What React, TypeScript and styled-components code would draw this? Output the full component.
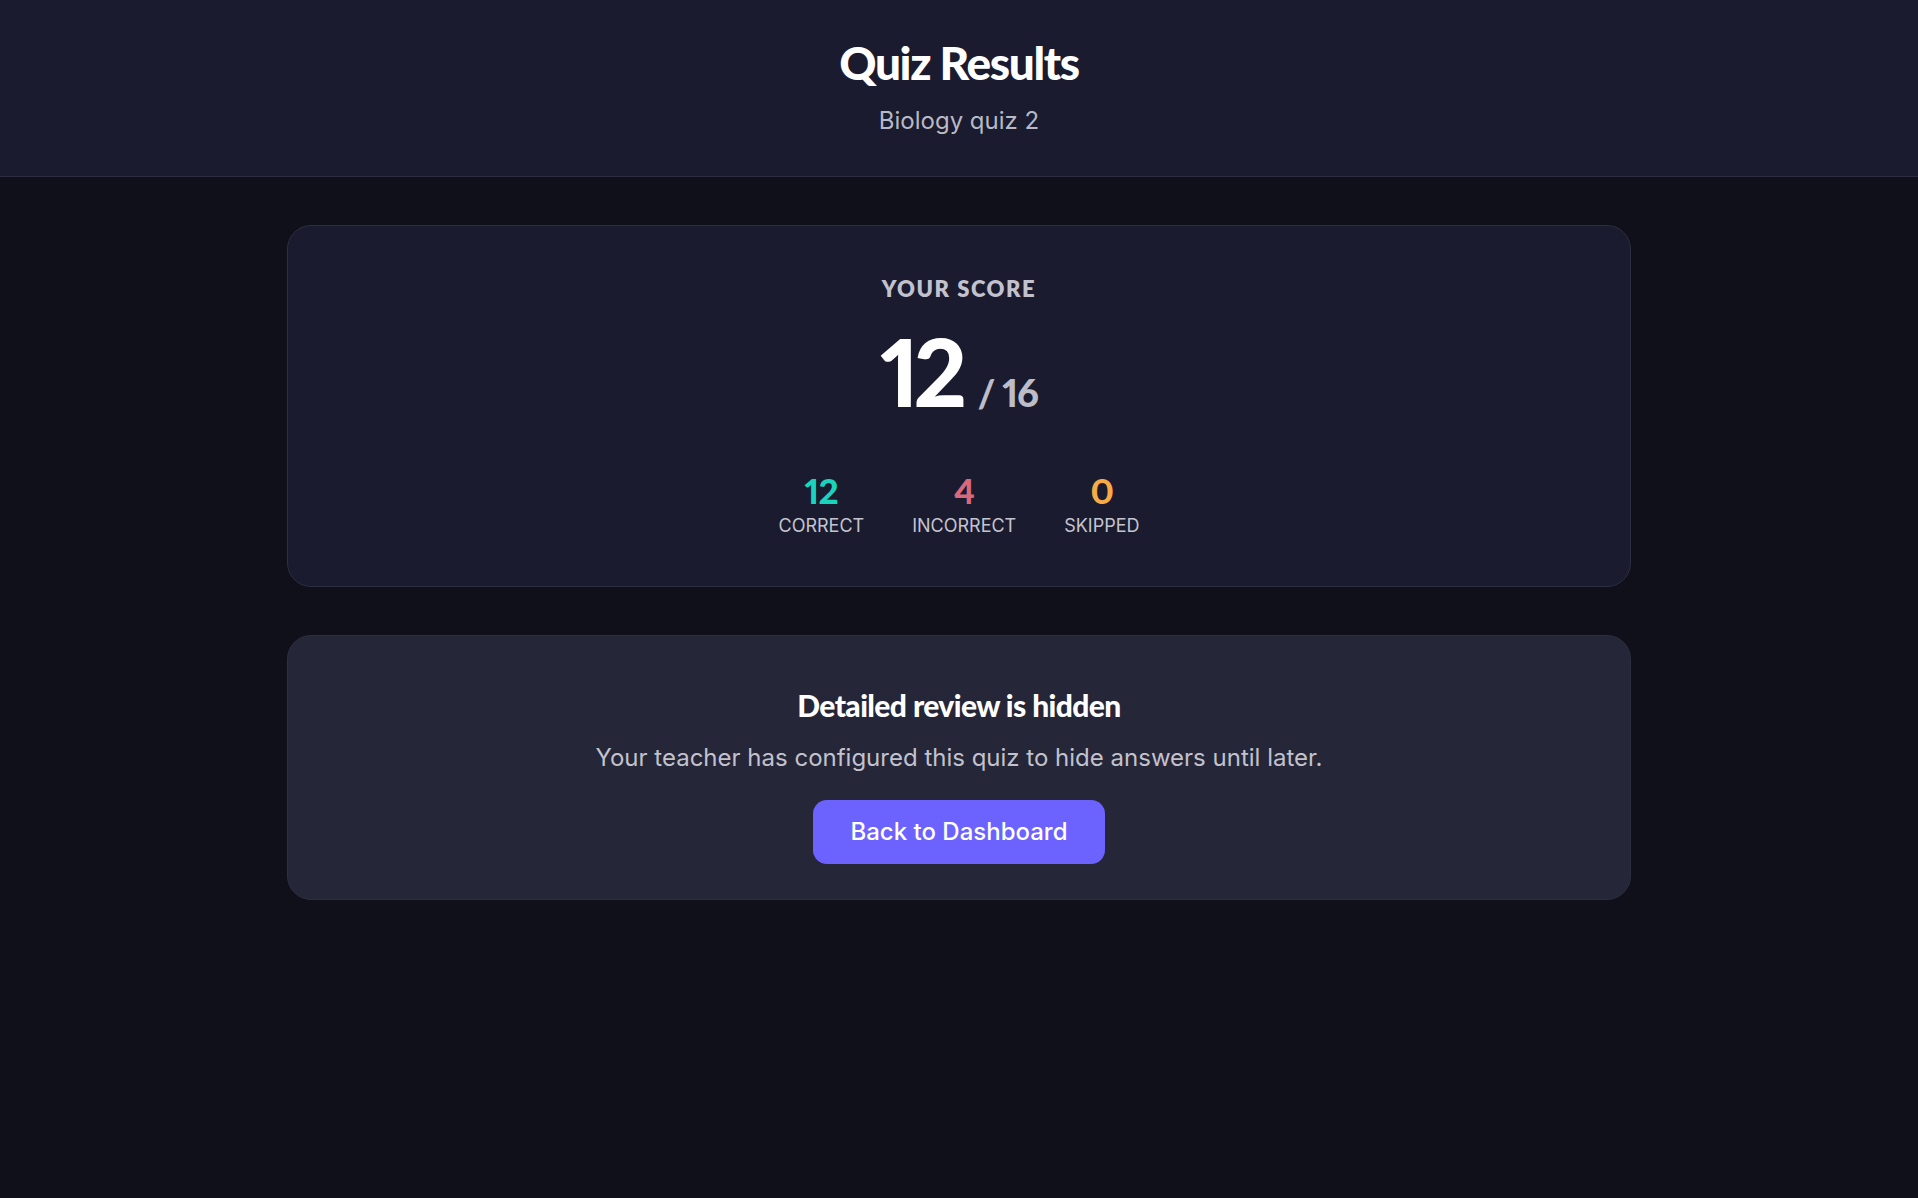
import styled, { createGlobalStyle } from 'styled-components'

const GlobalStyle = createGlobalStyle`
  * { box-sizing: border-box; }
  html, body {
    margin: 0;
    padding: 0;
    background: #0f1019;
    min-height: 100%;
  }
  body {
    font-family: Inter, 'Noto Sans', sans-serif;
    color: #ffffff;
  }
`

interface Stat {
  value: number
  label: string
  tone: 'correct' | 'incorrect' | 'skipped'
}

const stats: Stat[] = [
  { value: 12, label: 'Correct', tone: 'correct' },
  { value: 4, label: 'Incorrect', tone: 'incorrect' },
  { value: 0, label: 'Skipped', tone: 'skipped' },
]

const toneColor = {
  correct: '#19d3bd',
  incorrect: '#d9687c',
  skipped: '#f7aa45',
}

export default function App() {
  return (
    <Page>
      <GlobalStyle />
      <Header>
        <Title>Quiz Results</Title>
        <Subtitle>Biology quiz 2</Subtitle>
      </Header>

      <Main>
        <ScoreCard>
          <ScoreLabel>Your Score</ScoreLabel>
          <ScoreLine>
            <ScoreValue>12</ScoreValue>
            <ScoreTotal>/ 16</ScoreTotal>
          </ScoreLine>
          <StatRow>
            {stats.map((s) => (
              <StatItem key={s.label}>
                <StatValue $tone={s.tone}>{s.value}</StatValue>
                <StatLabel>{s.label}</StatLabel>
              </StatItem>
            ))}
          </StatRow>
        </ScoreCard>

        <ReviewCard>
          <ReviewTitle>Detailed review is hidden</ReviewTitle>
          <ReviewText>Your teacher has configured this quiz to hide answers until later.</ReviewText>
          <PrimaryButton type="button">Back to Dashboard</PrimaryButton>
        </ReviewCard>
      </Main>
    </Page>
  )
}

/* ─── Styles ─── */

const headingFont = `Lato, 'Noto Sans', sans-serif`

const Page = styled.div`
  min-height: 100vh;
  background: #0f1019;
`

const Header = styled.header`
  display: flex;
  flex-direction: column;
  align-items: center;
  padding: 35px 24px 37px;
  background: #1a1b2e;
  border-bottom: 1px solid #2c2d3f;
`

const Title = styled.h1`
  margin: 0 0 13px;
  font-family: ${headingFont};
  font-size: 46px;
  font-weight: 900;
  line-height: 1.2;
  letter-spacing: -0.03em;
  color: #ffffff;
`

const Subtitle = styled.p`
  margin: 0;
  font-size: 24px;
  line-height: 1.5;
  color: #b8b9c6;
`

const Main = styled.main`
  display: flex;
  flex-direction: column;
  gap: 48px;
  width: 100%;
  max-width: 1344px;
  margin: 0 auto;
  padding-top: 48px;
`

const Card = styled.section`
  display: flex;
  flex-direction: column;
  align-items: center;
  border: 1px solid #2d2e40;
  border-radius: 24px;
`

const ScoreCard = styled(Card)`
  padding: 50px 24px 47px;
  background: #1a1b2e;
`

const ScoreLabel = styled.div`
  font-family: ${headingFont};
  font-size: 22px;
  font-weight: 800;
  line-height: 1.2;
  letter-spacing: 0.07em;
  text-transform: uppercase;
  color: #c2c2ce;
`

const ScoreLine = styled.div`
  display: flex;
  align-items: baseline;
  gap: 16px;
  margin-top: 22px;
`

const ScoreValue = styled.span`
  font-family: ${headingFont};
  font-size: 93px;
  font-weight: 900;
  line-height: 1;
  letter-spacing: -0.06em;
  font-feature-settings: 'pnum';
  color: #ffffff;
`

const ScoreTotal = styled.span`
  font-family: ${headingFont};
  font-size: 38px;
  font-weight: 900;
  letter-spacing: -0.03em;
  font-feature-settings: 'pnum';
  color: #bdbdc9;
`

const StatRow = styled.div`
  display: flex;
  gap: 48px;
  margin-top: 51px;
`

const StatItem = styled.div`
  display: flex;
  flex-direction: column;
  align-items: center;
  gap: 1px;
`

const StatValue = styled.span<{ $tone: Stat['tone'] }>`
  font-family: ${headingFont};
  font-size: 35px;
  font-weight: 900;
  line-height: 1.2;
  letter-spacing: -0.02em;
  font-feature-settings: 'pnum';
  color: ${(p) => toneColor[p.$tone]};
`

const StatLabel = styled.span`
  font-size: 18px;
  line-height: 1.5;
  text-transform: uppercase;
  color: #c4c4d0;
`

const ReviewCard = styled(Card)`
  padding: 51px 24px 35px;
  background: #252638;
`

const ReviewTitle = styled.h2`
  margin: 0;
  font-family: ${headingFont};
  font-size: 30px;
  font-weight: 900;
  line-height: 1.2;
  letter-spacing: -0.02em;
  color: #ffffff;
`

const ReviewText = styled.p`
  margin: 17px 0 0;
  font-size: 24px;
  line-height: 1.5;
  color: #c2c2ce;
`

const PrimaryButton = styled.button`
  margin-top: 24px;
  padding: 18px 37px;
  border: none;
  border-radius: 14px;
  background: #6c63ff;
  color: #ffffff;
  font-family: Inter, sans-serif;
  font-size: 24px;
  font-weight: 500;
  line-height: 1.2;
  cursor: pointer;

  &:hover {
    background: #5a52e8;
  }
`
